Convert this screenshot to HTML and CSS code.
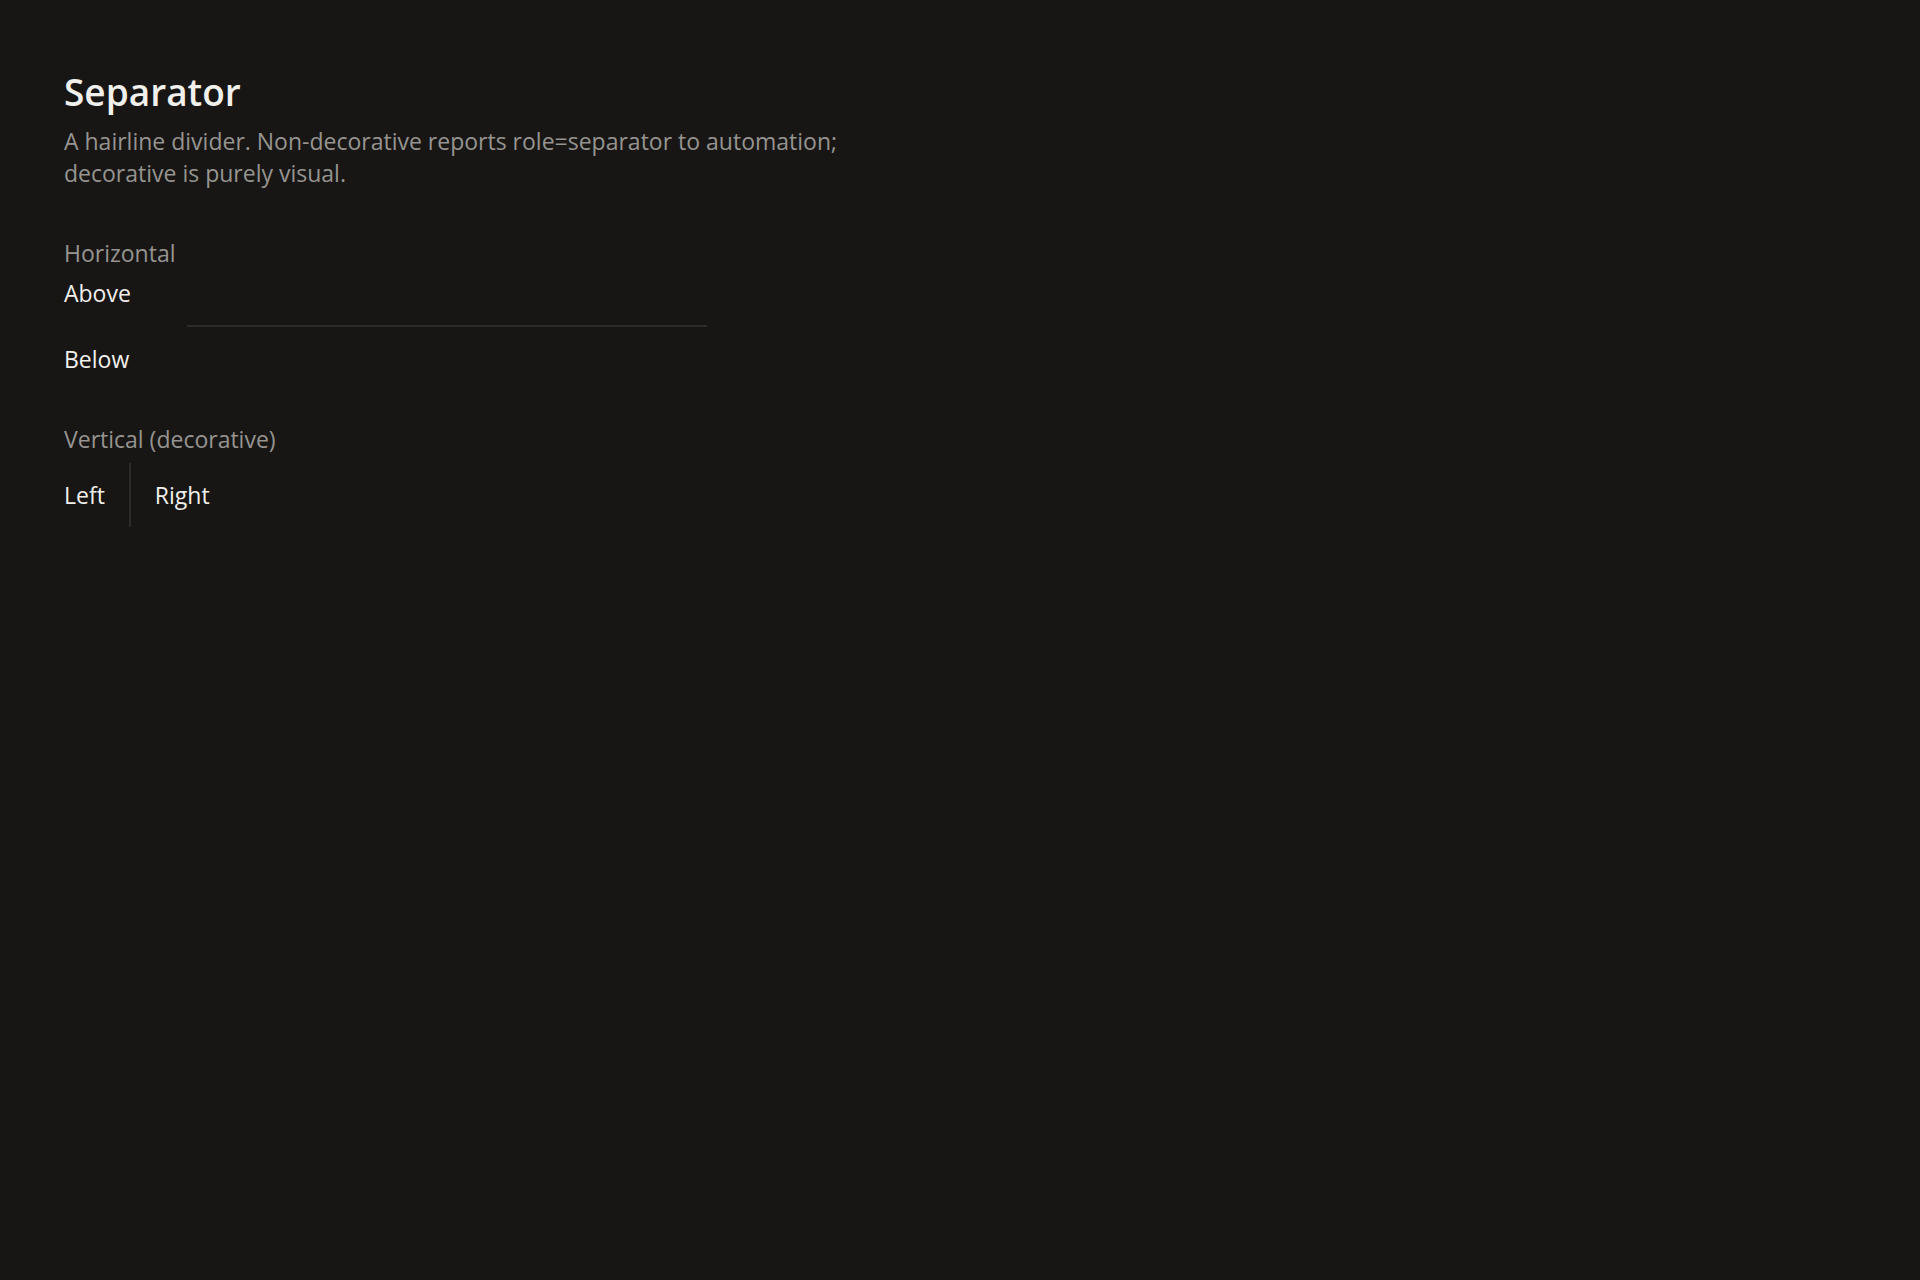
FILE: index.html
```html
<!DOCTYPE html>
<html lang="en">
 <head>
  <meta charset="utf-8">
  <title>Separator</title>
  <link rel="stylesheet" href="styles.css">
 </head>
 <body>
  <main class="page">
   <h1 class="title">Separator</h1>
   <p class="intro">A hairline divider. Non-decorative reports role=separator to automation;<br>decorative is purely visual.</p>

   <section class="example">
    <h2 class="label">Horizontal</h2>
    <div class="stack">
     <p>Above</p>
     <hr class="separator">
     <p>Below</p>
    </div>
   </section>

   <section class="example">
    <h2 class="label">Vertical (decorative)</h2>
    <div class="row">
     <span>Left</span>
     <div class="separator-vertical" aria-hidden="true"></div>
     <span>Right</span>
    </div>
   </section>
  </main>
 </body>
</html>
```

FILE: styles.css
```css
body {
  margin: 0;
  background-color: #171614;
  color: #f2f0ed;
  font-family: "Open Sans", sans-serif;
  font-size: 23px;
  line-height: 32px;
}
h1, h2, p {
  margin: 0;
}
.page {
  padding: 64px;
}
.title {
  font-size: 37px;
  font-weight: 600;
  line-height: 56px;
  margin-bottom: 5px;
}
.intro {
  color: #969490;
}
.example {
  margin-top: 48px;
}
.label {
  color: #969490;
  font-size: 23px;
  font-weight: 400;
  margin-bottom: 8px;
}
.stack {
  max-width: 766px;
}
.separator {
  width: 520px;
  height: 2px;
  margin: 16px auto;
  border: none;
  background-color: #2d2c2a;
}
.row {
  display: flex;
  align-items: center;
  gap: 24px;
}
.separator-vertical {
  width: 2px;
  height: 64px;
  background-color: #2d2c2a;
}
```
